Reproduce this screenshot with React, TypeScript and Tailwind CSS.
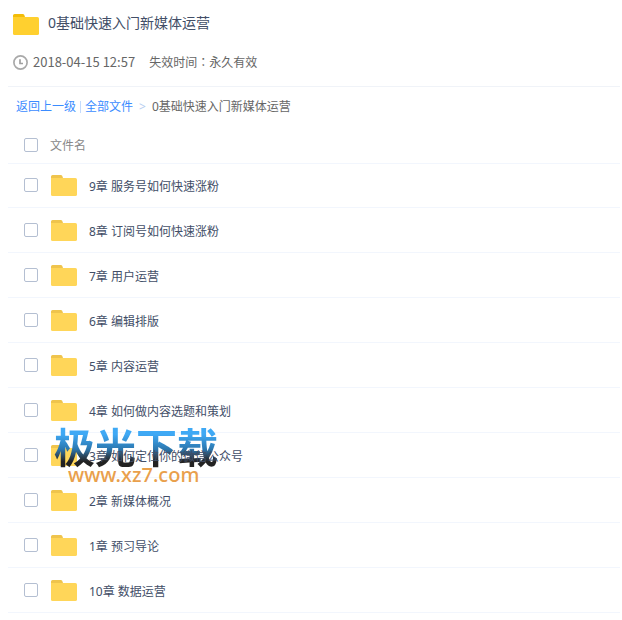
import React from 'react';

const chapters = [
  '9章 服务号如何快速涨粉',
  '8章 订阅号如何快速涨粉',
  '7章 用户运营',
  '6章 编辑排版',
  '5章 内容运营',
  '4章 如何做内容选题和策划',
  '3章 如何定位你的微信公众号',
  '2章 新媒体概况',
  '1章 预习导论',
  '10章 数据运营',
];

interface FolderIconProps {
  front: string;
  back: string;
}

const FolderIcon: React.FC<FolderIconProps> = ({ front, back }) => (
  <svg width="26" height="22" viewBox="0 0 26 22" className="shrink-0" aria-hidden="true">
    <path d="M0 2.6A1.6 1.6 0 0 1 1.6 1h8.2a1.6 1.6 0 0 1 1.4.8L12.4 5H0z" fill={back} />
    <path d="M0 4h24.4A1.6 1.6 0 0 1 26 5.6v14.8a1.6 1.6 0 0 1-1.6 1.6H1.6A1.6 1.6 0 0 1 0 20.4z" fill={front} />
  </svg>
);

const ClockIcon: React.FC = () => (
  <svg width="15" height="15" viewBox="0 0 15 15" fill="none" className="shrink-0" aria-hidden="true">
    <circle cx="7.5" cy="7.5" r="6.6" stroke="#a9a9a9" strokeWidth="1.7" />
    <path d="M7 4.2v4.3h3" stroke="#a0a0a0" strokeWidth="1.7" />
  </svg>
);

const checkboxClass =
  'h-[14px] w-[14px] shrink-0 appearance-none rounded-[2px] border border-[#b4bfd2] bg-white checked:bg-[#3b8cff]';

const FileRow: React.FC<{ name: string }> = ({ name }) => (
  <li className="flex h-[45px] items-center border-b border-[#f2f6fd] pl-4 first:h-11 first:pb-px">
    <label className="flex items-center">
      <input type="checkbox" className={checkboxClass} />
      <span className="ml-[13px]">
        <FolderIcon front="#ffd659" back="#efc44d" />
      </span>
      {/* names stay readable above the watermark */}
      <span className="relative z-10 ml-3 pt-1 text-[12px] leading-4 text-[#424e67]">{name}</span>
    </label>
  </li>
);

const Watermark: React.FC = () => (
  <div className="pointer-events-none absolute top-[299px] left-[46px]" aria-hidden="true">
    <div className="bg-linear-to-b from-[#3fa9f5] from-20% via-[#2c78b0] via-55% to-[#222] to-85% bg-clip-text text-[41px] leading-[42px] font-bold whitespace-nowrap text-transparent">
      极光下载
    </div>
    <div className="-mt-[3px] pl-[14px] text-[20px] leading-5 font-medium text-[#e9a04c]">www.xz7.com</div>
  </div>
);

const App: React.FC = () => {
  return (
    <main className="bg-white pr-[2px] pl-2 font-['Noto_Sans','Noto_Sans_CJK_SC',sans-serif]">
      <header className="border-b border-[#f0f3f8] pt-[13px] pb-4 pl-[5px]">
        <div className="flex h-[22px] items-center gap-[9px]">
          <FolderIcon front="#ffd02f" back="#f3bd08" />
          <h1 className="pb-0.5 text-[14px] leading-5 text-[#424e67]">0基础快速入门新媒体运营</h1>
        </div>
        <div className="mt-[19px] flex h-4 items-center text-[12px] leading-4 text-[#666]">
          <ClockIcon />
          <time className="ml-[5px] font-['Noto_Sans_CJK_SC',sans-serif] text-[13px]">2018-04-15 12:57</time>
          <span className="ml-[14px]">
            失效时间<span className="font-['Noto_Sans_CJK_TC',sans-serif]">：</span>永久有效
          </span>
        </div>
      </header>

      <nav className="flex h-10 items-center pl-2 text-[12px] leading-4">
        <a href="#up" className="text-[#3b8cff]">返回上一级</a>
        <span className="mx-[4px] h-3 w-px bg-[#c4dbfe]" />
        <a href="#all" className="text-[#3b8cff]">全部文件</a>
        <span className="mx-[6px] text-[#b5cdf0]">&gt;</span>
        <span className="text-[#666]">0基础快速入门新媒体运营</span>
      </nav>

      <section className="relative">
        <div className="flex h-[37px] items-center border-b border-[#f2f6fd] pl-4">
          <label className="flex items-center text-[12px] leading-4 text-[#888]">
            <input type="checkbox" className={checkboxClass} />
            <span className="ml-3 pt-0.5">文件名</span>
          </label>
        </div>
        <ul>
          {chapters.map((name) => (
            <FileRow key={name} name={name} />
          ))}
        </ul>
        <Watermark />
      </section>
    </main>
  );
};

export default App;
